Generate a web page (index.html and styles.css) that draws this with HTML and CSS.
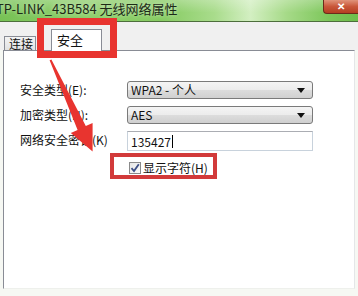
FILE: index.html
```html
<!DOCTYPE html>
<html lang="zh">
<head>
<meta charset="utf-8">
<link rel="stylesheet" href="styles.css">
</head>
<body>
<div class="window">
  <div class="titlebar">
    <span class="title">TP-LINK_43B584 无线网络属性</span>
    <span class="close">✕</span>
  </div>
  <div class="tabs">
    <div class="tab">连接</div>
    <div class="tab selected">安全</div>
  </div>
  <div class="panel">
    <div class="form">
      <label class="label">安全类型(E):</label>
      <div class="select"><span>WPA2 - 个人</span><span class="caret"></span></div>
      <label class="label">加密类型(N):</label>
      <div class="select"><span>AES</span><span class="caret"></span></div>
      <label class="label">网络安全密钥(K)</label>
      <div class="input"><span>135427</span><span class="cursor"></span></div>
      <div class="check-row">
        <span class="checkbox">
          <svg width="10" height="10" viewBox="0 0 10 10"><path d="M1.5 5.2 L4 8 L8.8 1.2" fill="none" stroke="#3d4f86" stroke-width="1.8"/></svg>
        </span>
        <span class="check-label">显示字符(H)</span>
      </div>
    </div>
  </div>
</div>
<div class="hl hl-tab"></div>
<div class="hl hl-check"></div>
<svg class="arrow" width="358" height="296" viewBox="0 0 358 296">
  <polygon points="51.4,59.4 85.8,126.1 92.6,122.9 92.6,151.5 70.8,133.1 77.6,129.9 49.6,60.2" fill="#e8342f"/>
</svg>
</body>
</html>
```

FILE: styles.css
```css
html, body {
  margin: 0;
  padding: 0;
}
body {
  width: 358px;
  height: 296px;
  overflow: hidden;
  position: relative;
  background: #f6f8f3;
  font-family: "Noto Sans CJK SC", "Noto Sans", sans-serif;
  font-size: 12px;
  color: #111;
}
.window {
  display: flex;
  flex-direction: column;
}
.titlebar {
  height: 21px;
  border-bottom: 1px solid #4d6e3c;
  background:
    linear-gradient(180deg, rgba(255,255,255,0.25) 0%, rgba(255,255,255,0) 60%),
    linear-gradient(90deg, #77c255 0%, #8fcf6c 25%, #86cb62 45%, #a9dc8c 60%, #d3efc2 70%, #a6da88 80%, #7cc65a 92%, #6dbd4b 100%);
  display: flex;
  align-items: flex-start;
  justify-content: space-between;
  overflow: hidden;
}
.title {
  font-size: 13px;
  line-height: 18px;
  margin-left: -4px;
  color: #1d2a17;
  white-space: nowrap;
  text-shadow: 0 0 4px rgba(255,255,255,0.6);
}
.close {
  width: 34px;
  height: 13px;
  margin-top: -1px;
  border: 1px solid #6b2a1a;
  border-right: none;
  border-radius: 0 0 0 4px;
  background: linear-gradient(180deg, #e0937a 0%, #c9573a 50%, #b43e22 100%);
  color: #fff;
  font-size: 10px;
  line-height: 11px;
  text-align: center;
  font-weight: bold;
}
.tabs {
  height: 28px;
  background: #f0f0f0;
  display: flex;
  align-items: flex-end;
  padding-left: 4px;
}
.tab {
  width: 32px;
  height: 14px;
  box-sizing: border-box;
  border: 1px solid #898c95;
  border-bottom: none;
  background: linear-gradient(180deg, #f3f3f3, #e2e2e2);
  padding-left: 4px;
  font-size: 12px;
  line-height: 13px;
  white-space: nowrap;
}
.tab.selected {
  width: 51px;
  height: 22px;
  margin-left: 15px;
  margin-bottom: -1px;
  background: #fff;
  padding: 2px 0 0 5px;
  font-size: 13px;
  line-height: 15px;
  position: relative;
  z-index: 1;
}
.panel {
  margin: 0 3px;
  height: 239px;
  box-sizing: border-box;
  background: #fff;
  border: 1px solid #898c95;
  border-right-color: #e4e6e8;
  border-bottom-color: #eef0ec;
  padding: 30px 0 0 16px;
}
.form {
  display: grid;
  grid-template-columns: 107px 186px;
  grid-auto-rows: auto;
  row-gap: 7px;
}
.label {
  font-size: 12px;
  line-height: 18px;
  white-space: nowrap;
  color: #111;
}
.select {
  height: 18px;
  box-sizing: border-box;
  border: 1px solid #7a7a7a;
  border-radius: 3px;
  background: linear-gradient(180deg, #f4f4f4 0%, #ececec 48%, #dcdcdc 52%, #d0d0d0 100%);
  display: flex;
  align-items: center;
  justify-content: space-between;
  padding: 0 7px 0 3px;
  font-size: 12px;
  line-height: 16px;
}
.caret {
  width: 0;
  height: 0;
  border-left: 4px solid transparent;
  border-right: 4px solid transparent;
  border-top: 5px solid #111;
}
.input {
  height: 20px;
  box-sizing: border-box;
  border: 1px solid #c8d2dc;
  border-top-color: #abadb3;
  background: #fff;
  display: flex;
  align-items: center;
  padding-left: 3px;
  font-size: 12px;
}
.cursor {
  width: 1px;
  height: 13px;
  background: #000;
  margin-left: 1px;
}
.check-row {
  grid-column: 2;
  display: flex;
  align-items: center;
  gap: 2px;
  margin-top: 2px;
  margin-left: 2px;
  height: 15px;
}
.checkbox {
  width: 12px;
  height: 12px;
  box-sizing: border-box;
  border: 1px solid #8a8a8a;
  background: linear-gradient(135deg, #e6e6e6, #fbfbfb);
  display: flex;
  align-items: center;
  justify-content: center;
}
.check-label {
  font-size: 12px;
  line-height: 15px;
  white-space: nowrap;
}
.hl {
  position: absolute;
  box-sizing: border-box;
  z-index: 5;
}
.hl-tab {
  left: 37px;
  top: 18px;
  width: 80px;
  height: 40px;
  border: 7px solid #e8342f;
}
.hl-check {
  left: 110px;
  top: 153px;
  width: 107px;
  height: 26px;
  border: 4px solid #d23a3a;
}
.arrow {
  position: absolute;
  left: 0;
  top: 0;
  z-index: 6;
}
```
